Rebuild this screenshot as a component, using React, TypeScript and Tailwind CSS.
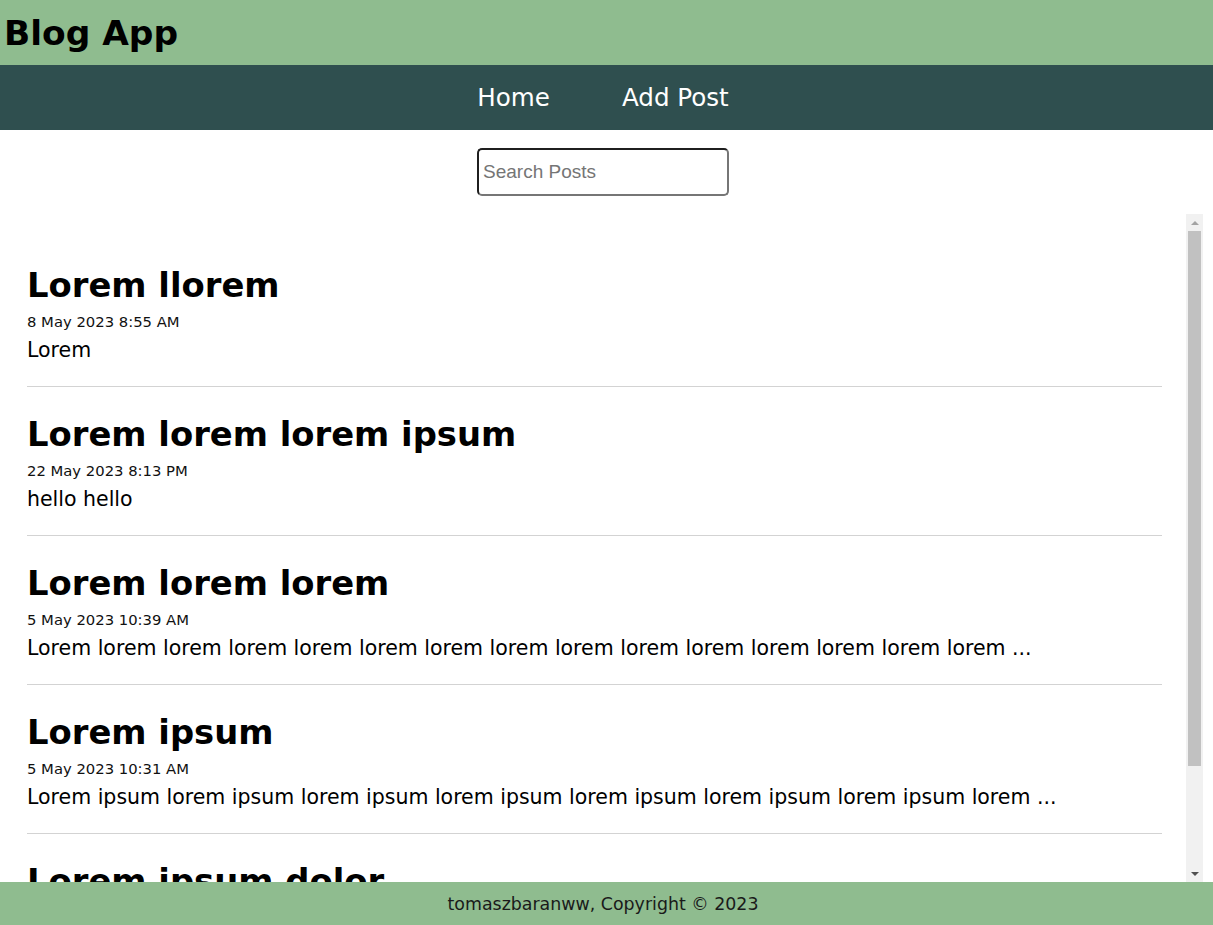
import { useState } from "react";

type Post = {
  id: number;
  title: string;
  datetime: string;
  body: string;
};

const posts: Post[] = [
  { id: 1, title: "Lorem llorem", datetime: "8 May 2023 8:55 AM", body: "Lorem" },
  {
    id: 2,
    title: "Lorem lorem lorem ipsum",
    datetime: "22 May 2023 8:13 PM",
    body: "hello hello",
  },
  {
    id: 3,
    title: "Lorem lorem lorem",
    datetime: "5 May 2023 10:39 AM",
    body: "Lorem lorem lorem lorem lorem lorem lorem lorem lorem lorem lorem lorem lorem lorem lorem ...",
  },
  {
    id: 4,
    title: "Lorem ipsum",
    datetime: "5 May 2023 10:31 AM",
    body: "Lorem ipsum lorem ipsum lorem ipsum lorem ipsum lorem ipsum lorem ipsum lorem ipsum lorem ...",
  },
  {
    id: 5,
    title: "Lorem ipsum dolor",
    datetime: "4 May 2023 9:12 AM",
    body: "Lorem ipsum dolor sit amet, consectetur adipiscing elit ...",
  },
];

function ScrollBar() {
  return (
    <div className="w-[17px] shrink-0 flex flex-col bg-[#f1f1f1]">
      <div className="h-[17px] flex items-center justify-center">
        <svg width="8" height="4" viewBox="0 0 8 4">
          <path d="M0 4 L4 0 L8 4 Z" fill="#a3a3a3" />
        </svg>
      </div>
      <div className="flex-1 min-h-0">
        <div className="h-[535px] mx-[2px] bg-[#c1c1c1]" />
      </div>
      <div className="h-[17px] flex items-center justify-center">
        <svg width="8" height="4" viewBox="0 0 8 4">
          <path d="M0 0 L8 0 L4 4 Z" fill="#505050" />
        </svg>
      </div>
    </div>
  );
}

export default function App() {
  const [search, setSearch] = useState("");

  const filtered = posts.filter(
    (p) =>
      p.title.toLowerCase().includes(search.toLowerCase()) ||
      p.body.toLowerCase().includes(search.toLowerCase()),
  );

  return (
    <div className="h-screen flex flex-col bg-white text-black font-['DejaVu_Sans',sans-serif]">
      {/* Header */}
      <header className="h-[65px] shrink-0 bg-[#8fbc8f] pl-[4px] pt-[13px]">
        <h1 className="text-[34.4px] leading-[40px] font-bold">Blog App</h1>
      </header>

      {/* Nav */}
      <nav className="h-[65px] shrink-0 bg-[#2f4f4f] flex items-center justify-center pr-[7px]">
        <ul className="flex gap-[72px] text-white text-[24.6px] leading-[30px]">
          <li>
            <a href="#">Home</a>
          </li>
          <li>
            <a href="#">Add Post</a>
          </li>
        </ul>
      </nav>

      {/* Main */}
      <main className="flex-1 min-h-0 flex flex-col">
        <form
          className="shrink-0 flex justify-center py-[18px] pr-[7px]"
          onSubmit={(e) => e.preventDefault()}
        >
          <input
            type="text"
            placeholder="Search Posts"
            value={search}
            onChange={(e) => setSearch(e.target.value)}
            className="w-[252px] h-[48px] px-[4px] rounded-[5px] border-2 border-solid border-t-[#1f1f1f] border-l-[#1f1f1f] border-r-[#767676] border-b-[#767676] font-['Liberation_Sans',Arial,sans-serif] text-[19px] text-black placeholder:text-[#757575] outline-none"
          />
        </form>

        <div className="flex-1 min-h-0 flex mx-[10px]">
          <div className="flex-1 min-w-0 overflow-y-auto [scrollbar-width:none] pl-[17px] pr-[24px] pt-[24px] pb-[24px]">
            {filtered.map((post) => (
              <article
                key={post.id}
                className="pt-[28px] pb-[22px] border-b border-solid border-[#d3d3d3]"
              >
                <h2 className="text-[33.8px] leading-[40px] font-bold">
                  {post.title}
                </h2>
                <p className="mt-[6px] text-[14.8px] leading-[20px] text-[#111]">
                  {post.datetime}
                </p>
                <p className="mt-[4px] text-[20.5px] leading-[28px]">
                  {post.body}
                </p>
              </article>
            ))}
          </div>
          <ScrollBar />
        </div>
      </main>

      {/* Footer */}
      <footer className="h-[43px] shrink-0 bg-[#8fbc8f] flex items-center justify-center pr-[7px]">
        <p className="text-[17.4px] leading-[24px] text-[#1a1a1a]">
          tomaszbaranww, Copyright © 2023
        </p>
      </footer>
    </div>
  );
}
